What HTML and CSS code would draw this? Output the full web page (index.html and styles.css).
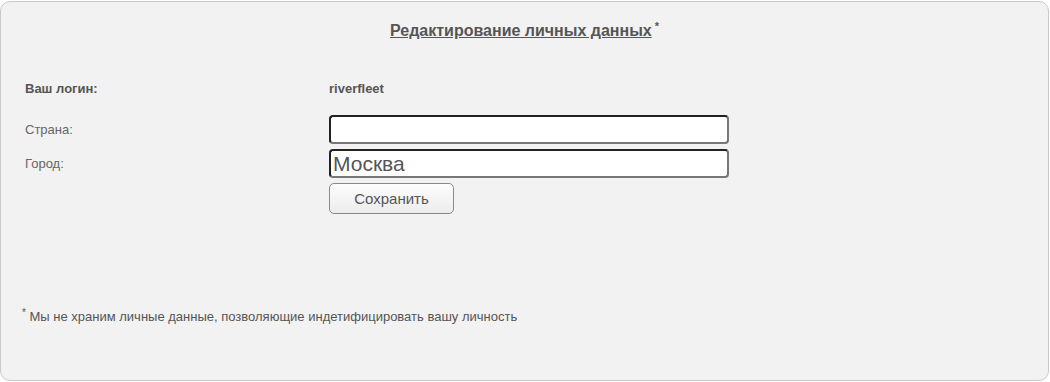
FILE: index.html
```html
<!DOCTYPE html>
<html lang="ru">
<head>
    <meta charset="UTF-8">
    <title>Редактирование личных данных</title>
    <link rel="stylesheet" href="styles.css">
</head>
<body>

<div class="box">
    <div class="title"><span class="title-text">Редактирование личных данных</span><sup>*</sup></div>

    <form class="form">
        <div class="label bold">Ваш логин:</div>
        <div class="value bold">riverfleet</div>

        <label class="label" for="country">Страна:</label>
        <input class="field" type="text" id="country" value="">

        <label class="label" for="city">Город:</label>
        <input class="field" type="text" id="city" value="Москва">

        <div></div>
        <div><button class="button" type="button">Сохранить</button></div>
    </form>

    <p class="note"><sup>*</sup> Мы не храним личные данные, позволяющие индетифицировать вашу личность</p>
</div>

</body>
</html>
```

FILE: styles.css
```css
body {
    margin: 0;
    background-color: #fff;
    font-family: "Liberation Sans", Arial, sans-serif;
    color: #555;
}

.box {
    box-sizing: border-box;
    width: 1049px;
    height: 380px;
    margin-top: 1px;
    border: 1px solid #c9c9c9;
    border-radius: 10px;
    background-color: #f2f2f2;
    padding: 15px 24px 0 24px;
}

.title {
    text-align: center;
    font-size: 16px;
    font-weight: bold;
    line-height: 19px;
    color: #555;
}

.title-text {
    text-decoration: underline;
}

.title sup {
    font-size: 11px;
    margin-left: 3px;
    vertical-align: 6px;
}

.form {
    display: grid;
    grid-template-columns: 304px 400px;
    row-gap: 5px;
    align-items: center;
    margin-top: 39px;
    font-size: 13px;
}

.label,
.value {
    line-height: 20px;
    color: #666;
}

.bold {
    font-weight: bold;
}

.value,
.label.bold {
    margin-bottom: 11px;
    color: #555;
}

.field {
    box-sizing: border-box;
    width: 400px;
    height: 29px;
    margin: 0;
    padding: 0 2px;
    border: 2px solid #222;
    border-bottom-color: #777;
    border-right-color: #777;
    border-radius: 4px;
    background-color: #fff;
    font-family: "Liberation Sans", Arial, sans-serif;
    font-size: 21px;
    color: #555;
}

.button {
    width: 125px;
    height: 31px;
    border: 1px solid #8a8a8a;
    border-radius: 5px;
    background: linear-gradient(#fdfdfd, #ececec);
    font-family: "Liberation Sans", Arial, sans-serif;
    font-size: 15px;
    color: #555;
    cursor: pointer;
}

.note {
    margin: 93px 0 0 -3px;
    font-size: 13px;
    color: #555;
}

.note sup {
    font-size: 10px;
}
```
